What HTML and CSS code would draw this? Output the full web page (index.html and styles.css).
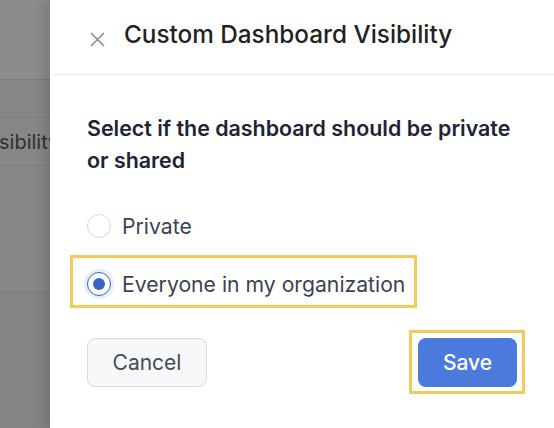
FILE: index.html
```html
<!DOCTYPE html>
<html>
<head>
<meta charset="utf-8">
<link rel="stylesheet" href="styles.css">
</head>
<body>
<div class="screen">
  <div class="backdrop">
    <div class="bd-top"></div>
    <div class="bd-band"></div>
    <div class="bd-row"><span class="bd-text">sibility</span></div>
    <div class="bd-block"></div>
    <div class="bd-rest"></div>
  </div>
  <div class="panel">
    <div class="header">
      <svg class="close" width="15" height="15" viewBox="0 0 15 15"><path d="M1 1 L14 14 M14 1 L1 14" stroke="#8a8a8a" stroke-width="1.5" fill="none"/></svg>
      <h1 class="title">Custom Dashboard Visibility</h1>
    </div>
    <div class="body">
      <p class="question">Select if the dashboard should be private or shared</p>
      <div class="options">
        <label class="option">
          <span class="radio"></span>
          <span class="opt-text">Private</span>
        </label>
        <div class="highlight hl-option">
          <label class="option">
            <span class="radio checked"><span class="dot"></span></span>
            <span class="opt-text">Everyone in my organization</span>
          </label>
        </div>
      </div>
      <div class="actions">
        <button class="btn btn-cancel">Cancel</button>
        <div class="highlight hl-save">
          <button class="btn btn-save">Save</button>
        </div>
      </div>
    </div>
  </div>
</div>
</body>
</html>
```

FILE: styles.css
```css
* { box-sizing: border-box; }
html, body { margin: 0; padding: 0; }
body {
  width: 554px;
  height: 428px;
  overflow: hidden;
  font-family: Inter, "Noto Sans", sans-serif;
  background: #ffffff;
}
.screen {
  display: flex;
  width: 554px;
  height: 428px;
}
.backdrop {
  width: 50px;
  flex: none;
  display: flex;
  flex-direction: column;
  background: #858585;
  overflow: hidden;
}
.bd-top {
  height: 80px;
  background: #8c8c8c;
  border-bottom: 1px solid #7c7c7c;
}
.bd-band {
  height: 38px;
  background: #868686;
  border-bottom: 1px solid #7e7e7e;
}
.bd-row {
  height: 48px;
  display: flex;
  align-items: center;
  background: #878787;
  border-bottom: 1px solid #7e7e7e;
}
.bd-text {
  font-size: 20px;
  color: #2f2f2f;
  white-space: nowrap;
  margin-left: -1px;
}
.bd-block {
  height: 127px;
  background: #868686;
  border-bottom: 1px solid #7a7a7a;
}
.bd-rest {
  flex: 1;
  background: #848484;
}
.panel {
  flex: 1;
  background: #ffffff;
  display: flex;
  flex-direction: column;
  box-shadow: -6px 0 10px rgba(0, 0, 0, 0.12);
  position: relative;
}
.header {
  height: 75px;
  border-bottom: 1px solid #ececec;
  display: flex;
  align-items: center;
  padding-left: 40px;
  padding-bottom: 6px;
}
.close {
  flex: none;
  margin-top: 10px;
}
.title {
  margin: 0 0 0 19px;
  font-size: 24.3px;
  line-height: 30px;
  font-weight: 500;
  color: #222222;
}
.body {
  padding: 37px 34px 0 37px;
}
.question {
  margin: 0;
  font-size: 21.4px;
  line-height: 32px;
  font-weight: 600;
  color: #1e2433;
}
.options {
  margin-top: 36px;
  display: flex;
  flex-direction: column;
  align-items: flex-start;
  gap: 15px;
}
.option {
  display: flex;
  align-items: center;
  gap: 11px;
  height: 28px;
}
.radio {
  width: 24px;
  height: 24px;
  flex: none;
  border-radius: 50%;
  border: 1.5px solid #d8d8d8;
  background: #fff;
  display: flex;
  align-items: center;
  justify-content: center;
}
.radio.checked {
  border-color: #3563c9;
  box-shadow: 0 0 0 3px #e7effb;
}
.dot {
  width: 12px;
  height: 12px;
  border-radius: 50%;
  background: #3563c9;
}
.opt-text {
  font-size: 21.2px;
  line-height: 28px;
  color: #3b4352;
}
.highlight {
  border: 3px solid #f6c95a;
}
.hl-option {
  margin-left: -17px;
  padding: 12px 9px 7px 14px;
}
.actions {
  margin-top: 22px;
  margin-right: 3px;
  display: flex;
  justify-content: space-between;
  align-items: center;
}
.btn {
  font-family: Inter, "Noto Sans", sans-serif;
  font-size: 21px;
  height: 49px;
  border-radius: 8px;
  cursor: pointer;
}
.btn-cancel {
  width: 120px;
  background: #f7f8fa;
  border: 1px solid #d8dadd;
  color: #454c5a;
}
.hl-save {
  padding: 5px 5px 4px 6px;
  margin-right: -8px;
}
.btn-save {
  width: 99px;
  background: #4a7bdc;
  border: none;
  color: #ffffff;
  font-weight: 500;
}
```
